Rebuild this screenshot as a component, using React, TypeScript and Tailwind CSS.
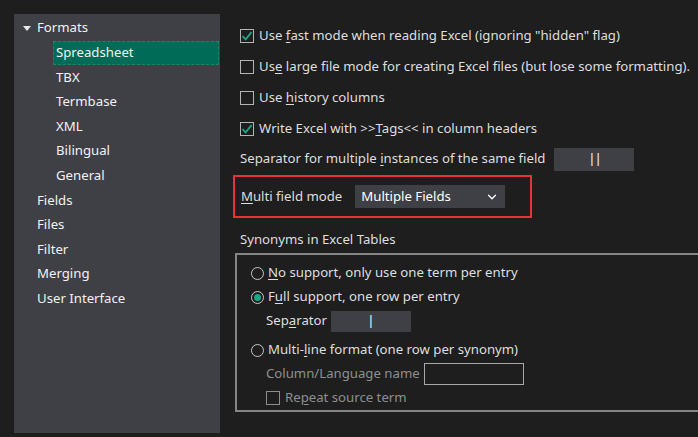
import { ChevronDown } from "lucide-react"

const font = { fontFamily: '"Noto Sans", "Open Sans", sans-serif' }

function Check({ checked, dim }: { checked?: boolean; dim?: boolean }) {
  return (
    <span
      className={`flex h-[14px] w-[14px] shrink-0 items-center justify-center border ${
        dim ? "border-[#8e8e8e]" : "border-[#b4b4b4]"
      }`}
    >
      {checked && (
        <svg width="12" height="12" viewBox="0 0 12 12">
          <path d="M1.5 6.2 L4.6 9.3 L10.6 2.2" fill="none" stroke="#1aa886" strokeWidth="1.8" />
        </svg>
      )}
    </span>
  )
}

function Radio({ on }: { on?: boolean }) {
  return (
    <span className="flex h-[13px] w-[13px] shrink-0 items-center justify-center rounded-full border border-[#c8c8c8]">
      {on && <span className="h-[7px] w-[7px] rounded-full bg-[#1aa886]" />}
    </span>
  )
}

const tree: { label: string; level: number; selected?: boolean; open?: boolean }[] = [
  { label: "Formats", level: 0, open: true },
  { label: "Spreadsheet", level: 1, selected: true },
  { label: "TBX", level: 1 },
  { label: "Termbase", level: 1 },
  { label: "XML", level: 1 },
  { label: "Bilingual", level: 1 },
  { label: "General", level: 1 },
  { label: "Fields", level: 0 },
  { label: "Files", level: 0 },
  { label: "Filter", level: 0 },
  { label: "Merging", level: 0 },
  { label: "User Interface", level: 0 },
]

export default function App() {
  return (
    <div
      className="flex h-[437px] w-[698px] overflow-hidden bg-[#1e1e1e] pl-[14px] pt-[14px] text-[13.2px] text-[#dedede]"
      style={font}
    >
      {/* tree */}
      <div className="h-[419px] w-[206px] shrink-0 bg-[#3f3f46] pt-[2px] text-[#f2f2f2]">
        {tree.map((t) => (
          <div key={t.label} className="flex h-[24.6px] items-center">
            {t.level === 0 ? (
              <>
                <span className="flex w-[23px] justify-center pl-[2px]">
                  {t.open && (
                    <svg width="8" height="5" viewBox="0 0 8 5">
                      <path d="M0 0 L8 0 L4 5 Z" fill="#e8e8e8" />
                    </svg>
                  )}
                </span>
                <span>{t.label}</span>
              </>
            ) : (
              <span
                className={`ml-[39px] flex h-full flex-1 items-center pl-[2px] mr-[1px] ${
                  t.selected ? "border border-dashed border-[#2a7d68] bg-[#006b56]" : "border border-transparent"
                }`}
              >
                {t.label}
              </span>
            )}
          </div>
        ))}
      </div>

      {/* settings */}
      <div className="ml-[13px] flex flex-1 flex-col pt-[6px]">
        {[
          { c: true, t: <>Use <u className="underline-offset-2">f</u>ast mode when reading Excel (ignoring "hidden" flag)</> },
          { c: false, t: <>Us<u className="underline-offset-2">e</u> large file mode for creating Excel files (but lose some formatting).</> },
          { c: false, t: <>Use <u className="underline-offset-2">h</u>istory columns</> },
          { c: true, t: <>Write Excel with &gt;&gt;<u className="underline-offset-2">T</u>ags&lt;&lt; in column headers</> },
        ].map((r, i) => (
          <div key={i} className="flex h-[31px] items-center gap-[5px] pl-[7px] whitespace-nowrap">
            <Check checked={r.c} />
            <span>{r.t}</span>
          </div>
        ))}

        <div className="flex h-[30px] items-center pl-[7px] whitespace-nowrap">
          <span>
            Separator for multiple <u className="underline-offset-2">i</u>nstances of the same field
          </span>
          <span className="ml-[9px] flex h-[23px] w-[80px] items-center justify-center bg-[#3f3f46] tracking-[-1px] text-white">
            ||
          </span>
        </div>

        <div className="mt-[1px] flex h-[43px] w-[299px] items-center border-2 border-[#e5323b] pl-[6px]">
          <span>
            <u className="underline-offset-2">M</u>ulti field mode
          </span>
          <span className="ml-[13px] flex h-[23px] w-[150px] items-center justify-between bg-[#3f3f46] pl-[6px] pr-[4px] text-white">
            Multiple Fields
            <ChevronDown size={14} strokeWidth={2.2} className="mr-[2px]" />
          </span>
        </div>

        <div className="mt-[11px] flex h-[22px] items-center pl-[7px]">Synonyms in Excel Tables</div>

        <div className="ml-[2px] mt-[2px] h-[159px] w-[470px] border-2 border-[#858585] pl-[14px] pt-[6px]">
          <div className="flex h-[24px] items-center gap-[4px] whitespace-nowrap">
            <Radio />
            <span>
              <u className="underline-offset-2">N</u>o support, only use one term per entry
            </span>
          </div>
          <div className="flex h-[24px] items-center gap-[4px] whitespace-nowrap">
            <Radio on />
            <span>
              F<u className="underline-offset-2">u</u>ll support, one row per entry
            </span>
          </div>
          <div className="flex h-[24px] items-center pl-[15px] whitespace-nowrap">
            <span>
              Sep<u className="underline-offset-2">a</u>rator
            </span>
            <span className="ml-[4px] flex h-[21px] w-[80px] items-center justify-center bg-[#3f3f46] text-white">
              |
            </span>
          </div>
          <div className="mt-[5px] flex h-[24px] items-center gap-[4px] whitespace-nowrap">
            <Radio />
            <span>
              Multi-<u className="underline-offset-2">l</u>ine format (one row per synonym)
            </span>
          </div>
          <div className="flex h-[24px] items-center pl-[15px] text-[#8f8f8f] whitespace-nowrap">
            <span>Column/Language name</span>
            <span className="ml-[4px] h-[22px] w-[100px] border border-[#a8a8a8]" />
          </div>
          <div className="flex h-[24px] items-center gap-[5px] pl-[15px] text-[#8f8f8f] whitespace-nowrap">
            <Check dim />
            <span>
              Re<u className="underline-offset-2">p</u>eat source term
            </span>
          </div>
        </div>
      </div>
    </div>
  )
}
